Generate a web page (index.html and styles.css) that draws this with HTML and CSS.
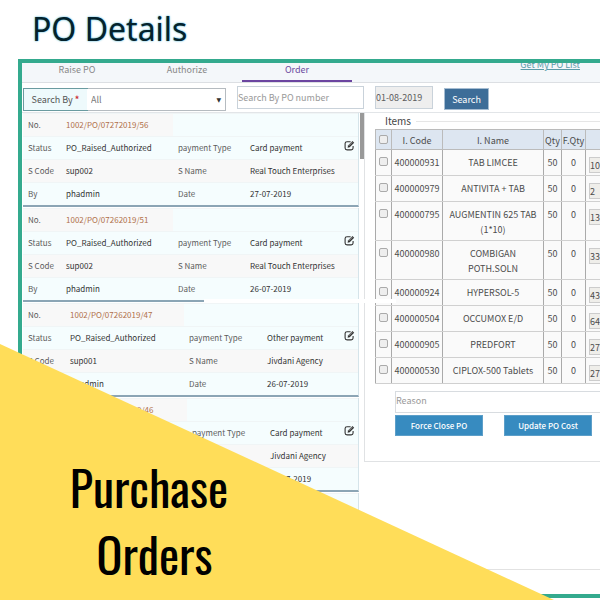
FILE: index.html
```html
<!DOCTYPE html>
<html lang="en">
<head>
<meta charset="utf-8">
<title>PO Details</title>
<link rel="stylesheet" href="styles.css">
</head>
<body>
<svg class="sprite" aria-hidden="true">
  <symbol id="edit" viewBox="0 0 20 20">
    <path d="M12 3.2H5.5Q2 3.2 2 6.5v8Q2 18 5.500 18h7.500q3.500 0 3.500-3.500V11" fill="none" stroke="#333" stroke-width="2"/>
    <path d="M6.500 14l.8-4 8.200-8.200 3 3-8.200 8.200z" fill="#333"/>
    <path d="M8.600 10.600l6.500-6.500" stroke="#fff" stroke-width="1"/>
  </symbol>
</svg>
<h1 class="title">PO Details</h1>
<main class="frame">
  <nav class="tabs">
    <a class="tab" href="#raise">Raise PO</a>
    <a class="tab" href="#authorize">Authorize</a>
    <a class="tab active" href="#order">Order</a>
    <a class="list-link" href="#list">Get My PO List</a>
  </nav>
  <form class="filters">
    <div class="search-by">
      <label for="by">Search By <b>*</b></label>
      <div class="select"><select id="by"><option>All</option></select></div>
    </div>
    <input class="po" type="text" aria-label="PO number" placeholder="Search By PO number">
    <input class="date" type="text" aria-label="Date" value="01-08-2019">
    <button class="search" type="button">Search</button>
  </form>
  <div class="work">
    <section class="orders">
      <article class="order">
        <span class="shade">No.</span><span class="shade num">1002/PO/07272019/56</span><span></span><span></span>
        <span>Status</span><span class="v">PO_Raised_Authorized</span><span>payment Type</span><span class="v">Card payment<button type="button" class="edit" aria-label="Edit"><svg><use href="#edit"/></svg></button></span>
        <span class="shade">S Code</span><span class="shade v">sup002</span><span class="shade">S Name</span><span class="shade v">Real Touch Enterprises</span>
        <span>By</span><span class="v">phadmin</span><span>Date</span><span class="v">27-07-2019</span>
      </article>
      <article class="order">
        <span class="shade">No.</span><span class="shade num">1002/PO/07262019/51</span><span></span><span></span>
        <span>Status</span><span class="v">PO_Raised_Authorized</span><span>payment Type</span><span class="v">Card payment<button type="button" class="edit" aria-label="Edit"><svg><use href="#edit"/></svg></button></span>
        <span class="shade">S Code</span><span class="shade v">sup002</span><span class="shade">S Name</span><span class="shade v">Real Touch Enterprises</span>
        <span>By</span><span class="v">phadmin</span><span>Date</span><span class="v">26-07-2019</span>
      </article>
      <article class="order wide">
        <span class="shade">No.</span><span class="shade num">1002/PO/07262019/47</span><span></span><span></span>
        <span>Status</span><span class="v">PO_Raised_Authorized</span><span>payment Type</span><span class="v">Other payment<button type="button" class="edit" aria-label="Edit"><svg><use href="#edit"/></svg></button></span>
        <span class="shade">S Code</span><span class="shade v">sup001</span><span class="shade">S Name</span><span class="shade v">Jivdani Agency</span>
        <span>By</span><span class="v">phadmin</span><span>Date</span><span class="v">26-07-2019</span>
      </article>
      <article class="order wider">
        <span class="shade"></span><span class="shade num">1002/PO/07262019/46</span><span></span><span></span>
        <span></span><span></span><span>payment Type</span><span class="v">Card payment<button type="button" class="edit" aria-label="Edit"><svg><use href="#edit"/></svg></button></span>
        <span class="shade"></span><span class="shade"></span><span class="shade"></span><span class="shade v">Jivdani Agency</span>
        <span></span><span></span><span></span><span class="v">26-07-2019</span>
      </article>
      <article class="order"><span></span><span></span><span></span><span></span></article>
    </section>
    <div class="scroll"></div>
    <section class="detail">
      <h2 class="legend">Items</h2>
      <table class="items">
        <colgroup><col class="c1"><col class="c2"><col class="c3"><col class="c4"><col class="c5"><col></colgroup>
        <thead><tr><th><input type="checkbox" aria-label="Select all"></th><th>I. Code</th><th>I. Name</th><th>Qty</th><th>F.Qty</th><th></th></tr></thead>
        <tbody>
          <tr><td><input type="checkbox" aria-label="Select"></td><td>400000931</td><td>TAB LIMCEE</td><td>50</td><td>0</td><td><input class="cost" type="text" aria-label="Cost" value="10"></td></tr>
          <tr><td><input type="checkbox" aria-label="Select"></td><td>400000979</td><td>ANTIVITA + TAB</td><td>50</td><td>0</td><td><input class="cost" type="text" aria-label="Cost" value="2"></td></tr>
          <tr><td><input type="checkbox" aria-label="Select"></td><td>400000795</td><td>AUGMENTIN 625 TAB<br>(1*10)</td><td>50</td><td>0</td><td><input class="cost" type="text" aria-label="Cost" value="13"></td></tr>
          <tr><td><input type="checkbox" aria-label="Select"></td><td>400000980</td><td>COMBIGAN<br>POTH.SOLN</td><td>50</td><td>0</td><td><input class="cost" type="text" aria-label="Cost" value="33"></td></tr>
          <tr><td><input type="checkbox" aria-label="Select"></td><td>400000924</td><td>HYPERSOL-5</td><td>50</td><td>0</td><td><input class="cost" type="text" aria-label="Cost" value="43"></td></tr>
          <tr><td><input type="checkbox" aria-label="Select"></td><td>400000504</td><td>OCCUMOX E/D</td><td>50</td><td>0</td><td><input class="cost" type="text" aria-label="Cost" value="64"></td></tr>
          <tr><td><input type="checkbox" aria-label="Select"></td><td>400000905</td><td>PREDFORT</td><td>50</td><td>0</td><td><input class="cost" type="text" aria-label="Cost" value="27"></td></tr>
          <tr><td><input type="checkbox" aria-label="Select"></td><td>400000530</td><td>CIPLOX-500 Tablets</td><td>50</td><td>0</td><td><input class="cost" type="text" aria-label="Cost" value="27"></td></tr>
        </tbody>
      </table>
      <div class="actions">
        <input class="reason" type="text" aria-label="Reason" placeholder="Reason">
        <button type="button">Force Close PO</button>
        <button type="button">Update PO Cost</button>
      </div>
    </section>
    <div class="gap"></div>
  </div>
</main>
<div class="corner"></div>
<p class="caption">Purchase<br>&nbsp;Orders</p>
</body>
</html>
```
FILE: styles.css
```css
* { box-sizing: border-box; }
body {
  margin: 0;
  min-height: 100vh;
  position: relative;
  overflow: hidden;
  display: flex;
  flex-direction: column;
  background: #fff;
  color: #5c5c5c;
  font: 9px/15px "Noto Sans CJK SC", "Open Sans", sans-serif;
}
input, select, button { font: inherit; color: inherit; margin: 0; border-radius: 0; }
input::placeholder { color: #999; opacity: 1; }
.sprite { position: absolute; width: 0; height: 0; }
.title {
  margin: 0;
  padding: 8px 0 0 32px;
  height: 59px;
  font: 400 32px/42px "Noto Sans", sans-serif;
  color: #04222c;
  text-shadow: 0 0 2px #2aa5d0;
}
.frame {
  flex: 1;
  display: flex;
  flex-direction: column;
  margin: 0 0 2px 18px;
  border: 4px solid #34aa8e;
  border-right: 0;
}
.tabs {
  display: flex;
  height: 20px;
  background: #f4f7fa;
  border-bottom: 1px solid #dcdfe3;
}
.tab { width: 110px; color: #888; text-align: center; text-decoration: none; line-height: 14px; }
.tab.active { color: #6b4a9e; border-bottom: 2px solid #6b45a0; }
.list-link { margin: -6px 20px 0 auto; height: 14px; color: #5b9aa8; clip-path: inset(6px 0 -2px 0); }
.filters { display: flex; align-items: flex-start; gap: 11px; padding: 3px 0 0 1px; height: 29px; }
.search-by { display: flex; width: 203px; height: 23px; margin-top: 2px; border: 1px solid #b5bbc0; }
.search-by label {
  width: 65px;
  margin: -1px;
  padding-top: 3px;
  border: 1px solid #6a9ba0;
  background: #eefafc;
  text-align: center;
  color: #555;
}
.search-by b { color: #c33; }
.select { flex: 1; display: flex; position: relative; }
.select select { width: 100%; appearance: none; border: 0; padding: 0 4px; background: #fff; color: #777; }
.select::after { content: "▼"; position: absolute; right: 4px; top: 3px; font: 6px/15px "DejaVu Sans", sans-serif; color: #333; }
.po, .date { height: 23px; padding: 0; border: 1px solid #c9d2da; }
.po { width: 127px; }
.date { width: 58px; background: #eee; }
.search { width: 45px; height: 22px; margin-top: 2px; padding: 0; border: 1px solid #a6bdd2; background: #3d6d98; color: #fff; }
.work { flex: 1; display: flex; align-items: flex-start; position: relative; border-top: 1px solid #e2e5e8; margin-bottom: 24px; border-bottom: 1px solid #e2e2e2; }
.orders { width: 336px; margin-left: 1px; font-size: 8px; }
.order {
  display: grid;
  grid-template-columns: 38px 112px 72px 1fr;
  grid-auto-rows: 23px;
  margin-bottom: 1px;
  border: solid #d5e4ea;
  border-width: 0 1px 0 0;
  border-bottom: 2px solid #8ba5b5;
  background: #f5fdfe;
}
.order.wide { grid-template-columns: 42px 119px 78px 1fr; }
.order.wider { grid-template-columns: 43px 121px 78px 1fr; }
.order span { padding: 3px 3px 0 5px; border-top: 1px solid #f0f5f6; white-space: nowrap; }
.order .shade { background: #f8f8f8; }
.order .num { color: #b0704a; }
.order .v { color: #333; display: flex; justify-content: space-between; }
.edit { width: 11px; height: 11px; padding: 0; border: 0; background: none; }
.edit svg { display: block; width: 11px; height: 11px; }
.scroll { width: 4px; height: 46px; margin-left: 1px; background: #999; }
.detail { flex: 1; min-width: 0; overflow: hidden; height: 349px; border: solid #e0e2e4; border-width: 0 0 1px 1px; padding-left: 10px; }
.legend { display: flex; align-items: center; gap: 5px; margin: 0; padding: 0 0 0 10px; font: inherit; font-size: 10px; line-height: 16px; color: #444; }
.legend::after { content: ""; flex: 1; height: 1px; background: #e6e6e6; }
.items { width: 270px; table-layout: fixed; border-collapse: collapse; text-align: center; color: #4c4c4c; background: #fafafa; }
.c1 { width: 16px; }
.c2 { width: 51px; }
.c3 { width: 101px; }
.c4 { width: 18px; }
.c5 { width: 24px; }
.items th, .items td { padding: 5px 0 3px; border: 1px solid #bbb; vertical-align: top; white-space: nowrap; }
.items td { height: 26px; border-color: #d0d0d0 #aaa; }
.items th { height: 20px; padding: 3px 0 1px; background: #dde6f1; font-weight: 400; }
.items input[type=checkbox] { appearance: none; display: block; width: 9px; height: 9px; margin: 2px auto 0; border: 1px solid #aaa; border-radius: 2px; background: #eee; }
.items .cost { display: block; width: 50px; height: 16px; margin: 2px 0 -4px 3px; padding: 0; border: 1px solid #ccc; background: #efeeea; }
.actions { display: grid; grid-template-columns: 88px 88px; column-gap: 21px; row-gap: 2px; padding: 7px 0 0 20px; }
.reason { grid-column: 1 / 3; width: 250px; height: 22px; padding: 0 0 4px; border: 1px solid #d8dce0; }
.actions button { height: 21px; padding: 0; border: 1px solid #5d9fc9; background: #378bc0; color: #fff; font-size: 8px; font-weight: 500; }
.gap { position: absolute; left: 182px; top: 186px; width: 192px; height: 4px; background: #fff; }
.corner { position: absolute; left: 0; bottom: 0; width: 554px; height: 256px; background: #ffdd59; clip-path: polygon(0 0, 100% 100%, 0 100%); }
.caption { position: absolute; left: 49px; top: 453px; width: 200px; margin: 0; text-align: center; color: #000; font-family: Oswald, "Noto Sans CJK SC", sans-serif; font-weight: 400; font-size: 48px; line-height: 67px; }
```
